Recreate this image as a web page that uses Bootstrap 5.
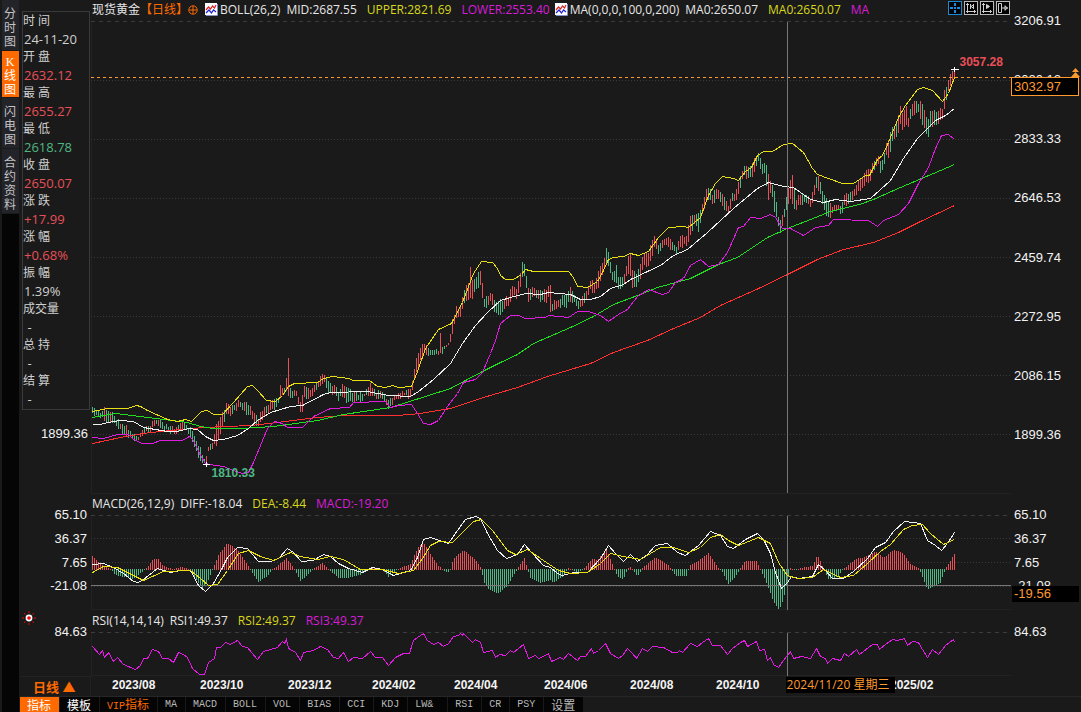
<!DOCTYPE html>
<html lang="zh-CN">
<head>
<meta charset="utf-8">
<meta name="viewport" content="width=device-width, initial-scale=1">
<title>现货黄金 日线</title>
<link href="https://cdn.jsdelivr.net/npm/bootstrap@5.3.0/dist/css/bootstrap.min.css" rel="stylesheet">
<script src="https://cdn.jsdelivr.net/npm/bootstrap@5.3.0/dist/js/bootstrap.bundle.min.js"></script>
<style>
  :root { --up:#e85058; --down:#4fb783; --amber:#ff9a2e; --hot:#ff6a00; --edge:#222; }
  body { background:#1a1a1a; color:#e6e6e6; font:12px/16px "Open Sans","Noto Sans CJK SC",sans-serif; }
  button { font:inherit; color:inherit; border:0; padding:0; background:none; }
  .terminal { height:100vh; min-height:680px; }
  .up { color:var(--up); } .down { color:var(--down); }
  .hot { color:var(--hot); } .yellow { color:#d8d81c; } .magenta { color:#d81cd8; }

  .rail { width:20px; padding:0 1px 0 2px; background:#1a1a1a; }
  .rail-fill { background:#050505; }
  .rail button { width:17px; padding:7px 2px 1px 1px; background:#23232a; color:#c4c4c4; line-height:14px; word-break:break-all; margin-bottom:1px; font-family:"Liberation Serif","Noto Sans CJK SC",sans-serif; }
  .rail button.active { background:var(--hot); color:#fff; padding:4px 2px 0 1px; }

  .board { display:grid; grid-template-columns:71px minmax(0,1fr) 70px; grid-template-rows:21px minmax(0,1fr) 21px 95px 22px 44px 20px; }
  .left-top { grid-row:1 / 3; padding-top:11px; }
  .quote { margin:0 1px 0 2px; border:1px solid #3a3a3a; height:399px; }
  .quote dt, .quote dd { margin:0; font-weight:400; line-height:18px; height:18px; white-space:pre; color:#d0d0d0; }
  .quote dd { padding-left:1px; font-size:13px; }
  .quote dd.up { color:var(--up); } .quote dd.down { color:var(--down); }
  .left-tick { text-align:right; padding-right:3px; margin-top:16px; }
  .ticks { font:13px/16px "Liberation Sans",sans-serif; color:#f2f2f2; }
  .axis { margin-top:-8px; padding-left:3px; }
  .axis > span { flex:1 1 0; }
  .axis.left { padding:0 4px 0 0; text-align:right; }
  .caption { white-space:nowrap; padding:0 1px 2px 1px; overflow:hidden; font-size:12px; }
  .caption .gap-l { margin-left:10px; } .caption .gap-s { margin-left:6px; }
  .pane { min-height:0; }
  .pane svg { display:block; width:100%; height:100%; overflow:hidden; }
  .plot { shape-rendering:crispEdges; box-shadow:inset 1px 0 var(--edge), inset 0 -1px var(--edge); }
  .plot path { fill:none; stroke-width:1; }
  .tool { width:14px; height:14px; background:#000; border:1px solid #b8b8b8; color:#d0d0d0; display:flex; }
  .tool.active { border-color:#1a8ad8; color:#1a8ad8; }
  .marker { font:bold 12px/14px "Liberation Sans",sans-serif; }
  .mark-high { left:94.4%; top:34px; } .mark-low { left:13.1%; top:94%; }
  .last-price { top:56px; left:0; right:2px; height:19px; line-height:17px; padding-left:2px; border:1px solid var(--amber); background:#000; color:var(--amber); }
  .cursor-value { top:71px; left:1px; right:2px; height:16px; line-height:16px; padding-left:2px; background:#000; color:var(--amber); }
  .arrows { right:1px; top:47px; width:9px; height:9px; }
  .dates { display:grid; grid-template-columns:21fr 88fr 88fr 84fr 82fr 90fr 86fr 86fr 88fr 86fr 121fr; font:bold 12px/18px "Liberation Sans",sans-serif; color:#f4f4f4; }
  .cursor-date { left:75.5%; top:1px; width:109px; height:16px; padding-left:1px; background:#000; color:var(--amber); font:12px/16px "Open Sans","Noto Sans CJK SC",sans-serif; white-space:nowrap; }
  .period { padding:1px 0 0 13px; font-size:13px; line-height:18px; font-weight:700; border-top:1px solid var(--edge); border-right:1px solid var(--edge); }
  .tabs { height:16px; gap:1px; padding-left:0; border-top:1px solid #262626; }
  .tabs button { padding:0 8px 0 7px; background:#050505; color:#b8b8b8; font:10px/14px "Liberation Mono","Noto Sans CJK SC",monospace; white-space:pre; }
  .tabs .zh { font-size:12px; font-family:"Noto Sans CJK SC",sans-serif; }
  .tabs .vip { color:var(--hot); }
  .tabs .active { background:var(--hot); color:#fff; }
  .tabs .plain { color:#fff; }
</style>
</head>
<body>
<div class="terminal d-flex flex-column overflow-hidden">
 <div class="d-flex flex-fill" style="min-height:0">
  <nav class="rail d-flex flex-column" aria-label="视图">
    <button type="button">分时图</button>
    <button type="button" class="active">K线图</button>
    <button type="button">闪电图</button>
    <button type="button">合约资料</button>
    <div class="rail-fill flex-fill"></div>
  </nav>

  <main class="board flex-fill">
    <aside class="left-top">
      <dl class="quote">
        <dt>时 间</dt><dd>24-11-20</dd>
        <dt>开 盘</dt><dd class="up">2632.12</dd>
        <dt>最 高</dt><dd class="up">2655.27</dd>
        <dt>最 低</dt><dd class="down">2618.78</dd>
        <dt>收 盘</dt><dd class="up">2650.07</dd>
        <dt>涨 跌</dt><dd class="up">+17.99</dd>
        <dt>涨 幅</dt><dd class="up">+0.68%</dd>
        <dt>振 幅</dt><dd>1.39%</dd>
        <dt>成交量</dt><dd> -</dd>
        <dt>总 持</dt><dd> -</dd>
        <dt>结 算</dt><dd> -</dd>
      </dl>
      <div class="ticks left-tick">1899.36</div>
    </aside>

    <header class="caption d-flex align-items-center">
      <span>现货黄金</span><span class="hot">【日线】</span>
      <svg class="flex-shrink-0" width="10" height="10" viewBox="0 0 10 10" fill="none" stroke="#ff6a00"><circle cx="5" cy="5" r="4.2"/><path d="M5 1v8M1 5h8"/></svg>
      <svg class="flex-shrink-0" style="margin-left:7px" width="13" height="13" viewBox="0 0 13 13"><use href="#chip"/></svg>
      <span style="margin-left:2px">BOLL(26,2)</span><span class="gap-s">MID:2687.55</span>
      <span class="gap-l yellow">UPPER:2821.69</span><span class="gap-l magenta">LOWER:2553.40</span>
      <svg class="flex-shrink-0" style="margin-left:5px" width="13" height="13" viewBox="0 0 13 13"><g id="chip"><path fill="#fff" d="M0 0h12v12H0z"/><path d="M12.500 1v11.500H1" fill="none" stroke="#8890c8"/><path d="M1 7l2.500-3 2 2 2-3 2 2L11 2" fill="none" stroke="#e02020" stroke-width="1.200"/><path d="M1 10l3-3 2.500 3 2-3L11 9" fill="none" stroke="#2020d0" stroke-width="1.200"/></g></svg>
      <span style="margin-left:2px">MA(0,0,0,100,0,200)</span><span class="gap-s">MA0:2650.07</span>
      <span class="gap-l yellow">MA0:2650.07</span><span class="gap-l magenta">MA</span>
      <span class="d-flex ms-auto" style="gap:2px;margin-bottom:3px">
        <button type="button" class="tool active" aria-label="十字光标"><svg width="12" height="12" viewBox="0 0 12 12" fill="currentColor"><path d="M5 1h2v3H5zM5 8h2v3H5zM1 5h3v2H1zM8 5h3v2H8zM5 5h2v2H5z"/></svg></button>
        <button type="button" class="tool" aria-label="区间"><svg width="12" height="12" viewBox="0 0 12 12" fill="none" stroke="currentColor"><path d="M2.500 1v10M1 9.500h10M1 2.500h3M9.500 8v3M5.500 2v5M8.500 2v5M9 2.500L6 4.500l3 2"/></svg></button>
        <button type="button" class="tool" aria-label="回放"><svg width="12" height="12" viewBox="0 0 12 12" fill="none" stroke="currentColor"><path d="M2.500 1v10M1 9.500h10M1 2.500h3M9.500 8v3"/><path fill="currentColor" d="M5.500 2.500v4l3-2z"/></svg></button>
        <button type="button" class="tool" aria-label="右移"><svg width="12" height="12" viewBox="0 0 12 12" fill="none" stroke="currentColor"><path d="M1.500 1.500h3v9h-3zM4 6h7M8 3.500v5M8 4l2.500 2L8 8"/></svg></button>
      </span>
    </header>
    <div></div>

    <section class="pane position-relative">
      <svg id="price" class="plot" viewBox="91 21 920 473" preserveAspectRatio="none"></svg>
      <span class="marker up position-absolute mark-high">3057.28</span>
      <span class="marker down position-absolute mark-low">1810.33</span>
    </section>
    <div class="position-relative ticks">
      <div class="axis d-flex flex-column h-100"><span>3206.91</span><span>3020.12</span><span>2833.33</span><span>2646.53</span><span>2459.74</span><span>2272.95</span><span>2086.15</span><span>1899.36</span></div>
      <svg class="arrows position-absolute" viewBox="0 0 9 9" fill="#ff9a2e"><path d="M4.500 0L8 4H1zM4.500 4L9 9H0z"/></svg>
      <div class="last-price position-absolute">3032.97</div>
    </div>

    <div></div>
    <div class="caption d-flex align-items-center"><span>MACD(26,12,9)</span><span class="gap-s">DIFF:-18.04</span><span class="gap-l yellow">DEA:-8.44</span><span class="gap-l magenta">MACD:-19.20</span></div>
    <div></div>

    <div class="ticks"><div class="axis left d-flex flex-column h-100"><span>65.10</span><span>36.37</span><span>7.65</span><span>-21.08</span></div></div>
    <section class="pane"><svg id="macd" class="plot" viewBox="91 515 920 95" preserveAspectRatio="none"></svg></section>
    <div class="ticks position-relative">
      <div class="axis d-flex flex-column h-100"><span>65.10</span><span>36.37</span><span>7.65</span><span>-21.08</span></div>
      <div class="cursor-value position-absolute">-19.56</div>
    </div>

    <div><svg class="d-block" style="margin-left:2px" width="14" height="16" viewBox="0 0 14 16"><path d="M7 1v2M7 13v2M0 8h2M12 8h2M2 3l1.500 1.500M10.500 11.500L12 13M12 3l-1.500 1.500M3.500 11.500L2 13" stroke="#f00"/><circle cx="7" cy="8" r="2.600" fill="#f00" stroke="#fff" stroke-width="1.600"/></svg></div>
    <div class="caption d-flex align-items-center pb-0"><span>RSI(14,14,14)</span><span class="gap-s">RSI1:49.37</span><span class="gap-l yellow">RSI2:49.37</span><span class="gap-l magenta">RSI3:49.37</span></div>
    <div></div>

    <div class="ticks"><div class="axis left">84.63</div></div>
    <section class="pane"><svg id="rsi" class="plot" viewBox="91 632 920 44" preserveAspectRatio="none"></svg></section>
    <div class="ticks"><div class="axis">84.63</div></div>

    <button type="button" class="period hot text-start">日线 ▲</button>
    <div class="dates position-relative"><span></span><span>2023/08</span><span>2023/10</span><span>2023/12</span><span>2024/02</span><span>2024/04</span><span>2024/06</span><span>2024/08</span><span>2024/10</span><span></span><span>2025/02</span>
      <span class="cursor-date position-absolute">2024/11/20 星期三</span></div>
    <div></div>
  </main>
 </div>

 <div class="d-flex">
  <div class="rail d-flex"><div class="rail-fill flex-fill"></div></div>
  <nav class="tabs d-flex flex-fill" aria-label="指标">
    <button type="button" class="zh active">指标</button><button type="button" class="zh plain">模板</button><button type="button" class="vip">VIP<span class="zh">指标</span></button><button type="button">MA</button><button type="button">MACD</button><button type="button">BOLL</button><button type="button">VOL</button><button type="button">BIAS</button><button type="button">CCI</button><button type="button">KDJ</button><button type="button">LW&amp; </button><button type="button">RSI</button><button type="button">CR</button><button type="button">PSY</button><button type="button" class="zh">设置</button>
  </nav>
 </div>
</div>

<script>
const NS = 'http://www.w3.org/2000/svg';
const add = (svg, tag, attrs) => { const e = document.createElementNS(NS, tag); for (const k in attrs) e.setAttribute(k, attrs[k]); svg.appendChild(e); };
const pts = s => s.trim().split(/\s+/).map(p => p.split(',').map(v => isNaN(v) ? v : +v));
const UP = '#e85058', DOWN = '#4fb783';
const line = (svg, s, color) => add(svg, 'path', { d: 'M' + pts(s).map(p => (p[0] + .5) + ' ' + (p[1] + .5)).join('L'), stroke: color });
const rule = (svg, y, color, dash) => add(svg, 'path', { d: `M91 ${y + .5}H1011`, stroke: color, 'stroke-dasharray': dash });
const bar = (svg, x, y, h, color) => add(svg, 'rect', { x, y, width: 1, height: Math.max(1, h), fill: color });
const at = (k, x, i) => { let n = 1; while (n < k.length - 1 && k[n][0] < x) n++; const a = k[n - 1], b = k[n], t = Math.min(1, Math.max(0, (x - a[0]) / (b[0] - a[0]))); return a[i] + (b[i] - a[i]) * t; };
let seed = 11; const rnd = () => (seed = (seed * 16807) % 2147483647) / 2147483647;

/* price: x, high, low, direction */
const candles = pts(`92,409,413,g 97,411,416,g 100,414,418,g 103,408,417,r 105,409,423,g 108,412,421,r 113,415,424,g 118,421,428,g 123,423,433,g 128,428,437,g 133,433,439,g 139,436,440,r 144,428,434,r 150,424,430,r 153,419,426,r 158,420,424,g 164,424,430,g 170,427,433,g 175,429,435,r 180,422,429,r 185,424,430,g 190,428,436,g 195,440,450,g 200,448,462,g 204,459,463,g 206,455,464,r 208,446,453,r 213,440,445,r 216,424,446,r 222,413,428,r 226,403,413,r 231,406,416,g 237,401,408,r 240,401,409,g 246,402,414,g 250,407,413,r 254,414,423,g 258,418,425,g 264,407,417,r 270,401,411,r 274,400,408,g 278,399,405,r 280,387,400,r 284,388,394,g 286,380,390,r 288,358,396,g 290,390,398,g 296,391,396,r 300,402,411,g 302,395,411,r 304,386,396,r 308,389,399,r 314,387,393,r 320,376,386,r 323,376,380,r 328,381,392,g 333,385,395,g 338,391,400,g 343,384,395,r 347,389,403,g 352,392,400,g 358,393,401,g 364,392,398,r 370,383,395,r 375,392,399,g 382,391,397,r 387,401,408,g 392,397,404,r 398,392,398,r 404,391,396,r 409,391,397,r 412,382,391,r 415,362,376,r 417,354,369,r 423,342,354,r 425,345,353,g 428,348,356,g 435,351,356,g 438,349,355,r 440,333,353,g 442,347,353,g 449,341,345,r 452,320,333,r 456,308,317,r 460,308,318,r 464,288,301,r 468,283,300,r 470,267,298,g 472,280,299,g 475,277,289,g 480,271,284,r 484,298,309,g 490,292,302,r 495,302,313,g 500,300,315,g 504,299,307,r 508,296,307,r 511,284,297,r 516,289,297,r 520,274,287,r 522,261,275,r 525,267,278,g 528,287,302,g 534,289,297,r 540,290,301,g 546,291,303,r 548,285,296,r 550,285,312,g 552,303,311,r 560,298,307,g 566,295,307,g 570,287,301,r 574,296,304,g 578,300,310,r 584,295,302,r 590,281,291,r 595,284,292,r 598,271,288,r 602,264,275,r 606,250,263,g 609,255,268,g 612,273,281,g 616,267,282,g 619,280,292,g 624,274,283,r 628,256,272,r 630,253,276,g 632,270,288,g 636,275,285,g 640,265,278,r 644,252,264,r 648,252,266,g 651,242,261,r 654,235,246,r 658,245,255,g 664,237,245,r 668,236,246,r 672,243,251,g 676,246,254,g 680,236,248,r 686,236,245,r 690,216,235,r 694,217,225,g 698,214,230,g 702,205,215,r 705,193,206,r 708,187,199,g 712,193,204,g 716,190,200,r 720,192,201,g 725,200,212,g 728,205,213,r 731,193,204,r 735,192,201,r 740,177,189,r 743,168,176,r 747,164,178,g 751,168,178,r 755,156,170,r 758,153,162,g 761,162,172,g 765,165,175,g 767,166,197,g 769,180,200,r 771,180,188,g 773,187,208,g 777,208,222,g 779,222,234,g 782,217,227,r 784,208,218,r 787,190,204,r 791,177,197,r 793,175,208,g 795,200,212,r 798,195,206,r 803,195,204,g 807,195,203,r 810,198,208,r 813,190,203,r 815,182,190,r 817,174,190,r 819,180,193,g 822,191,202,g 827,201,218,g 830,204,217,r 833,207,213,r 837,202,208,r 841,206,215,g 845,193,204,r 848,195,206,g 853,189,199,r 857,183,193,r 864,175,185,r 870,167,180,r 873,163,170,r 877,155,163,r 880,162,172,g 883,157,167,g 886,145,155,r 888,140,158,r 891,130,147,r 893,124,134,r 895,127,140,g 898,115,133,r 900,106,124,g 902,113,130,r 906,106,125,g 908,117,125,r 911,106,118,g 914,101,113,r 918,102,112,g 921,102,122,g 924,110,128,g 927,123,140,g 930,113,128,r 935,110,122,g 938,113,125,r 942,107,118,r 944,90,109,r 947,85,93,r 950,75,87,r 952,71,78,r 954,70,79,g`);
const price = document.getElementById('price');
rule(price, 21, '#3c3c3c', '4 4');
for (let y = 80; y < 440; y += 59) rule(price, y, '#3a3a3a', '1 2');
for (let x = 92; x <= 954; x += 2) {
  const exact = candles.some(c => c[0] === x && c[2] - c[1] > 16);
  const near = candles.reduce((a, b) => Math.abs(b[0] - x) < Math.abs(a[0] - x) ? b : a);
  const j = exact || x === 954 ? 0 : 1;
  const h = Math.round(at(candles, x, 1) + j * (rnd() * 4 - 2)), l = Math.round(at(candles, x, 2) + j * (rnd() * 4 - 2));
  const flip = j && rnd() < .18;
  bar(price, x, h, l - h, (near[3] === 'r') !== flip ? UP : DOWN);
}
line(price, '92,443 120,437 150,432 203,427 250,425 277,422 317,417 343,415 397,415 420,413 450,408 483,397 517,387 547,376 590,363 613,352 647,340 673,328 700,317 720,305 756,289 787,274 817,259 843,249 873,242 898,232 920,221 954,205', '#ff3030');
line(price, '92,417 115,413 140,416 187,422 200,426 213,428 240,428 273,426 317,420 343,414 390,407 425,396 450,388 482,371 500,362 517,354 533,343 570,327 593,316 613,304 637,295 657,287 690,278 718,264 737,257 767,237 787,228 810,219 830,211 859,204 873,199 900,187 933,173 954,164', '#20dd20');
line(price, '92,437 103,438 117,434 128,434 133,439 142,443 152,443 160,440 182,440 189,436 193,440 200,455 205,463 215,465 223,466 233,470 242,473 248,472 253,462 260,445 267,428 274,421 282,423 287,427 302,427 313,416 330,408 349,407 353,402 385,401 390,407 398,405 411,404 417,413 423,423 430,424 438,420 447,406 457,393 463,382 475,379 482,372 490,353 495,340 500,323 510,315 518,315 525,318 545,317 548,315 568,317 577,311 588,311 600,315 608,321 618,314 627,309 637,296 648,289 662,294 668,292 675,282 683,278 690,265 700,259 708,266 718,264 727,252 738,227 743,226 750,217 760,218 770,214 775,217 782,228 790,228 803,235 815,227 828,225 833,219 868,220 877,226 883,220 898,214 908,203 918,183 928,167 935,148 941,135 948,134 954,139', '#e01ce0');
line(price, '92,424 100,424 107,422 120,420 133,421 143,427 167,431 177,431 188,428 197,429 205,436 213,440 223,439 237,435 248,428 257,420 270,412 290,406 302,405 323,394 330,392 367,391 388,395 410,396 418,391 433,379 450,363 462,343 475,325 487,312 500,300 510,297 525,293 540,294 548,292 570,294 580,299 590,299 600,296 610,288 623,284 630,279 647,271 660,265 673,255 687,249 707,232 733,208 757,188 768,182 783,186 793,187 810,199 823,202 835,199 850,201 870,198 890,180 903,158 917,138 935,120 945,115 954,108', '#f0f0f0');
line(price, '92,411 107,408 127,408 136,405 140,406 147,410 167,419 177,421 185,419 191,421 201,411 207,410 213,414 222,414 233,402 247,386 252,385 257,390 266,400 275,401 282,395 288,386 294,383 317,382 323,378 332,376 348,378 353,380 369,380 377,386 385,387 392,385 398,387 411,386 417,371 425,348 438,329 451,323 462,302 473,273 481,261 492,262 497,268 500,275 505,279 513,279 521,274 525,269 533,271 568,271 573,277 577,286 587,287 597,281 603,270 608,259 613,257 623,256 630,253 638,255 648,251 658,237 668,227 683,226 688,227 700,217 708,195 715,183 722,176 733,178 738,180 745,171 751,167 757,155 763,151 772,151 783,144 792,143 803,152 812,168 817,174 828,178 842,183 853,183 865,175 869,175 877,159 882,155 888,142 898,117 905,105 917,89 923,87 932,90 942,101 948,93 954,77', '#e8e010');
rule(price, 77, '#ff9a2e', '3 3');
add(price, 'path', { d: 'M787.5 22V493', stroke: '#777' });
add(price, 'path', { d: 'M951 69.500h8M954.500 67v5M203 464.500h7M206.500 462v5', stroke: '#fff' });

/* MACD */
const macd = document.getElementById('macd');
rule(macd, 515, '#3c3c3c', '4 4');
[538, 562, 586].forEach(y => rule(macd, y, '#3a3a3a', '1 2'));
const hist = pts('92,13 100,5 110,0 115,-6 133,-10 143,-2 147,2 153,10 158,10 163,3 172,0 182,2 190,-1 197,-13 202,-19 207,-14 211,-4 213,2 218,14 227,26 237,19 247,5 250,-1 258,-13 267,-7 272,0 277,3 286,11 293,2 296,-4 300,-12 307,-6 313,0 322,6 328,0 338,-9 348,-9 360,-6 367,0 373,2 382,0 388,-8 397,0 410,5 418,22 423,27 430,15 437,4 442,0 447,-4 450,0 453,10 463,19 475,9 481,0 483,-12 487,-19 497,-25 507,-17 512,-8 517,0 524,11 527,0 530,-9 540,-14 550,-11 553,-14 563,-7 568,1 577,-4 583,0 592,10 597,9 606,20 613,2 617,-8 623,-11 627,0 631,2 637,-8 642,1 655,12 668,4 675,-7 686,-7 690,4 698,8 708,16 718,1 722,-3 728,-15 735,-8 740,1 745,8 756,8 760,0 767,-16 773,-33 779,-41 783,-31 787,-13 790,1 795,-2 800,1 812,3 817,14 823,1 828,-10 837,-8 843,0 857,11 863,11 875,18 883,11 893,19 903,16 910,5 919,0 927,-21 940,-14 945,0 954,15');
for (let x = 92; x <= 954; x += 2) { const v = Math.round(at(hist, x, 1)); v >= 0 ? bar(macd, x, 569 - v, v + 1, UP) : bar(macd, x, 569, -v, DOWN); }
rule(macd, 585, '#777', 'none');
add(macd, 'path', { d: 'M787.5 516V610', stroke: '#777' });
line(macd, '92,564 103,563 113,567 123,573 133,581 138,582 143,579 157,568 170,572 180,570 190,570 198,585 205,591 213,583 222,567 227,557 237,547 247,548 258,561 270,561 278,558 287,548 293,552 301,561 313,560 323,554 330,556 338,563 348,568 362,572 372,567 382,569 393,575 410,570 417,557 423,539 430,537 448,543 457,530 465,519 475,516 480,518 487,533 497,550 506,558 517,554 524,544 532,553 543,565 550,567 557,573 562,575 573,572 587,572 600,558 608,545 615,553 623,561 630,554 637,561 647,554 655,545 667,543 677,552 685,555 698,545 710,531 720,535 727,546 733,548 745,539 757,533 763,539 770,553 775,572 781,588 787,582 791,576 798,578 812,576 818,564 825,570 832,578 843,578 853,571 867,558 875,547 885,542 893,531 904,521 920,523 927,540 935,545 941,550 947,543 954,532', '#f0f0f0');
line(macd, '92,572 103,566 117,567 127,572 143,580 163,571 190,570 200,578 208,585 217,584 227,570 238,553 248,550 260,556 273,560 290,552 300,556 317,559 330,556 343,559 360,569 382,569 398,573 413,570 422,558 430,545 438,541 452,542 462,532 473,521 481,519 492,530 507,550 515,554 527,549 543,560 558,570 570,573 587,572 600,563 610,553 623,556 640,559 660,547 673,547 688,552 700,547 710,537 720,534 728,540 738,545 758,537 770,543 778,562 787,575 797,578 812,577 823,569 840,577 853,575 867,563 880,551 890,544 903,529 912,525 922,524 930,533 943,544 954,539', '#e8e010');

/* RSI */
const rsi = document.getElementById('rsi');
rule(rsi, 632, '#3c3c3c', '4 4');
add(rsi, 'path', { d: 'M787.5 633V676', stroke: '#777' });
line(rsi, '92,646 99,654 102,650 104,657 108,652 113,661 117,657 123,664 135,669 140,665 143,658 147,658 152,649 158,651 162,658 168,658 173,662 178,652 183,654 187,657 192,668 199,674 204,674 208,662 214,658 216,647 220,647 225,642 230,644 237,640 242,646 247,647 251,652 257,659 263,651 277,647 282,641 284,643 286,639 288,648 295,652 300,660 303,652 313,650 320,646 327,649 333,657 338,658 343,652 348,661 353,657 362,658 370,651 375,657 382,657 388,665 395,657 403,653 409,653 413,640 417,637 423,633 427,640 433,644 438,642 443,646 448,643 453,636 458,635 460,633 462,635 463,633 472,642 475,639 480,642 483,652 492,650 495,657 499,654 505,655 510,650 513,652 523,644 528,658 535,655 538,658 543,656 548,653 551,661 560,657 563,659 568,653 577,660 580,656 585,656 591,648 593,653 598,650 605,643 610,653 618,658 622,655 627,648 632,653 636,658 642,648 647,651 652,646 663,647 672,652 677,652 679,650 682,652 690,643 697,646 702,642 708,638 712,645 720,645 727,654 732,648 740,642 744,640 747,646 756,641 759,650 764,649 767,660 770,657 773,664 778,667 783,660 790,651 793,658 801,656 810,658 816,648 820,656 825,658 827,663 832,658 840,660 844,653 848,656 856,649 859,654 872,644 877,644 879,649 885,644 892,639 897,640 904,638 907,645 912,641 918,642 922,649 927,657 932,649 938,654 945,645 953,639 954,642', '#e01ce0');
</script>
</body>
</html>
